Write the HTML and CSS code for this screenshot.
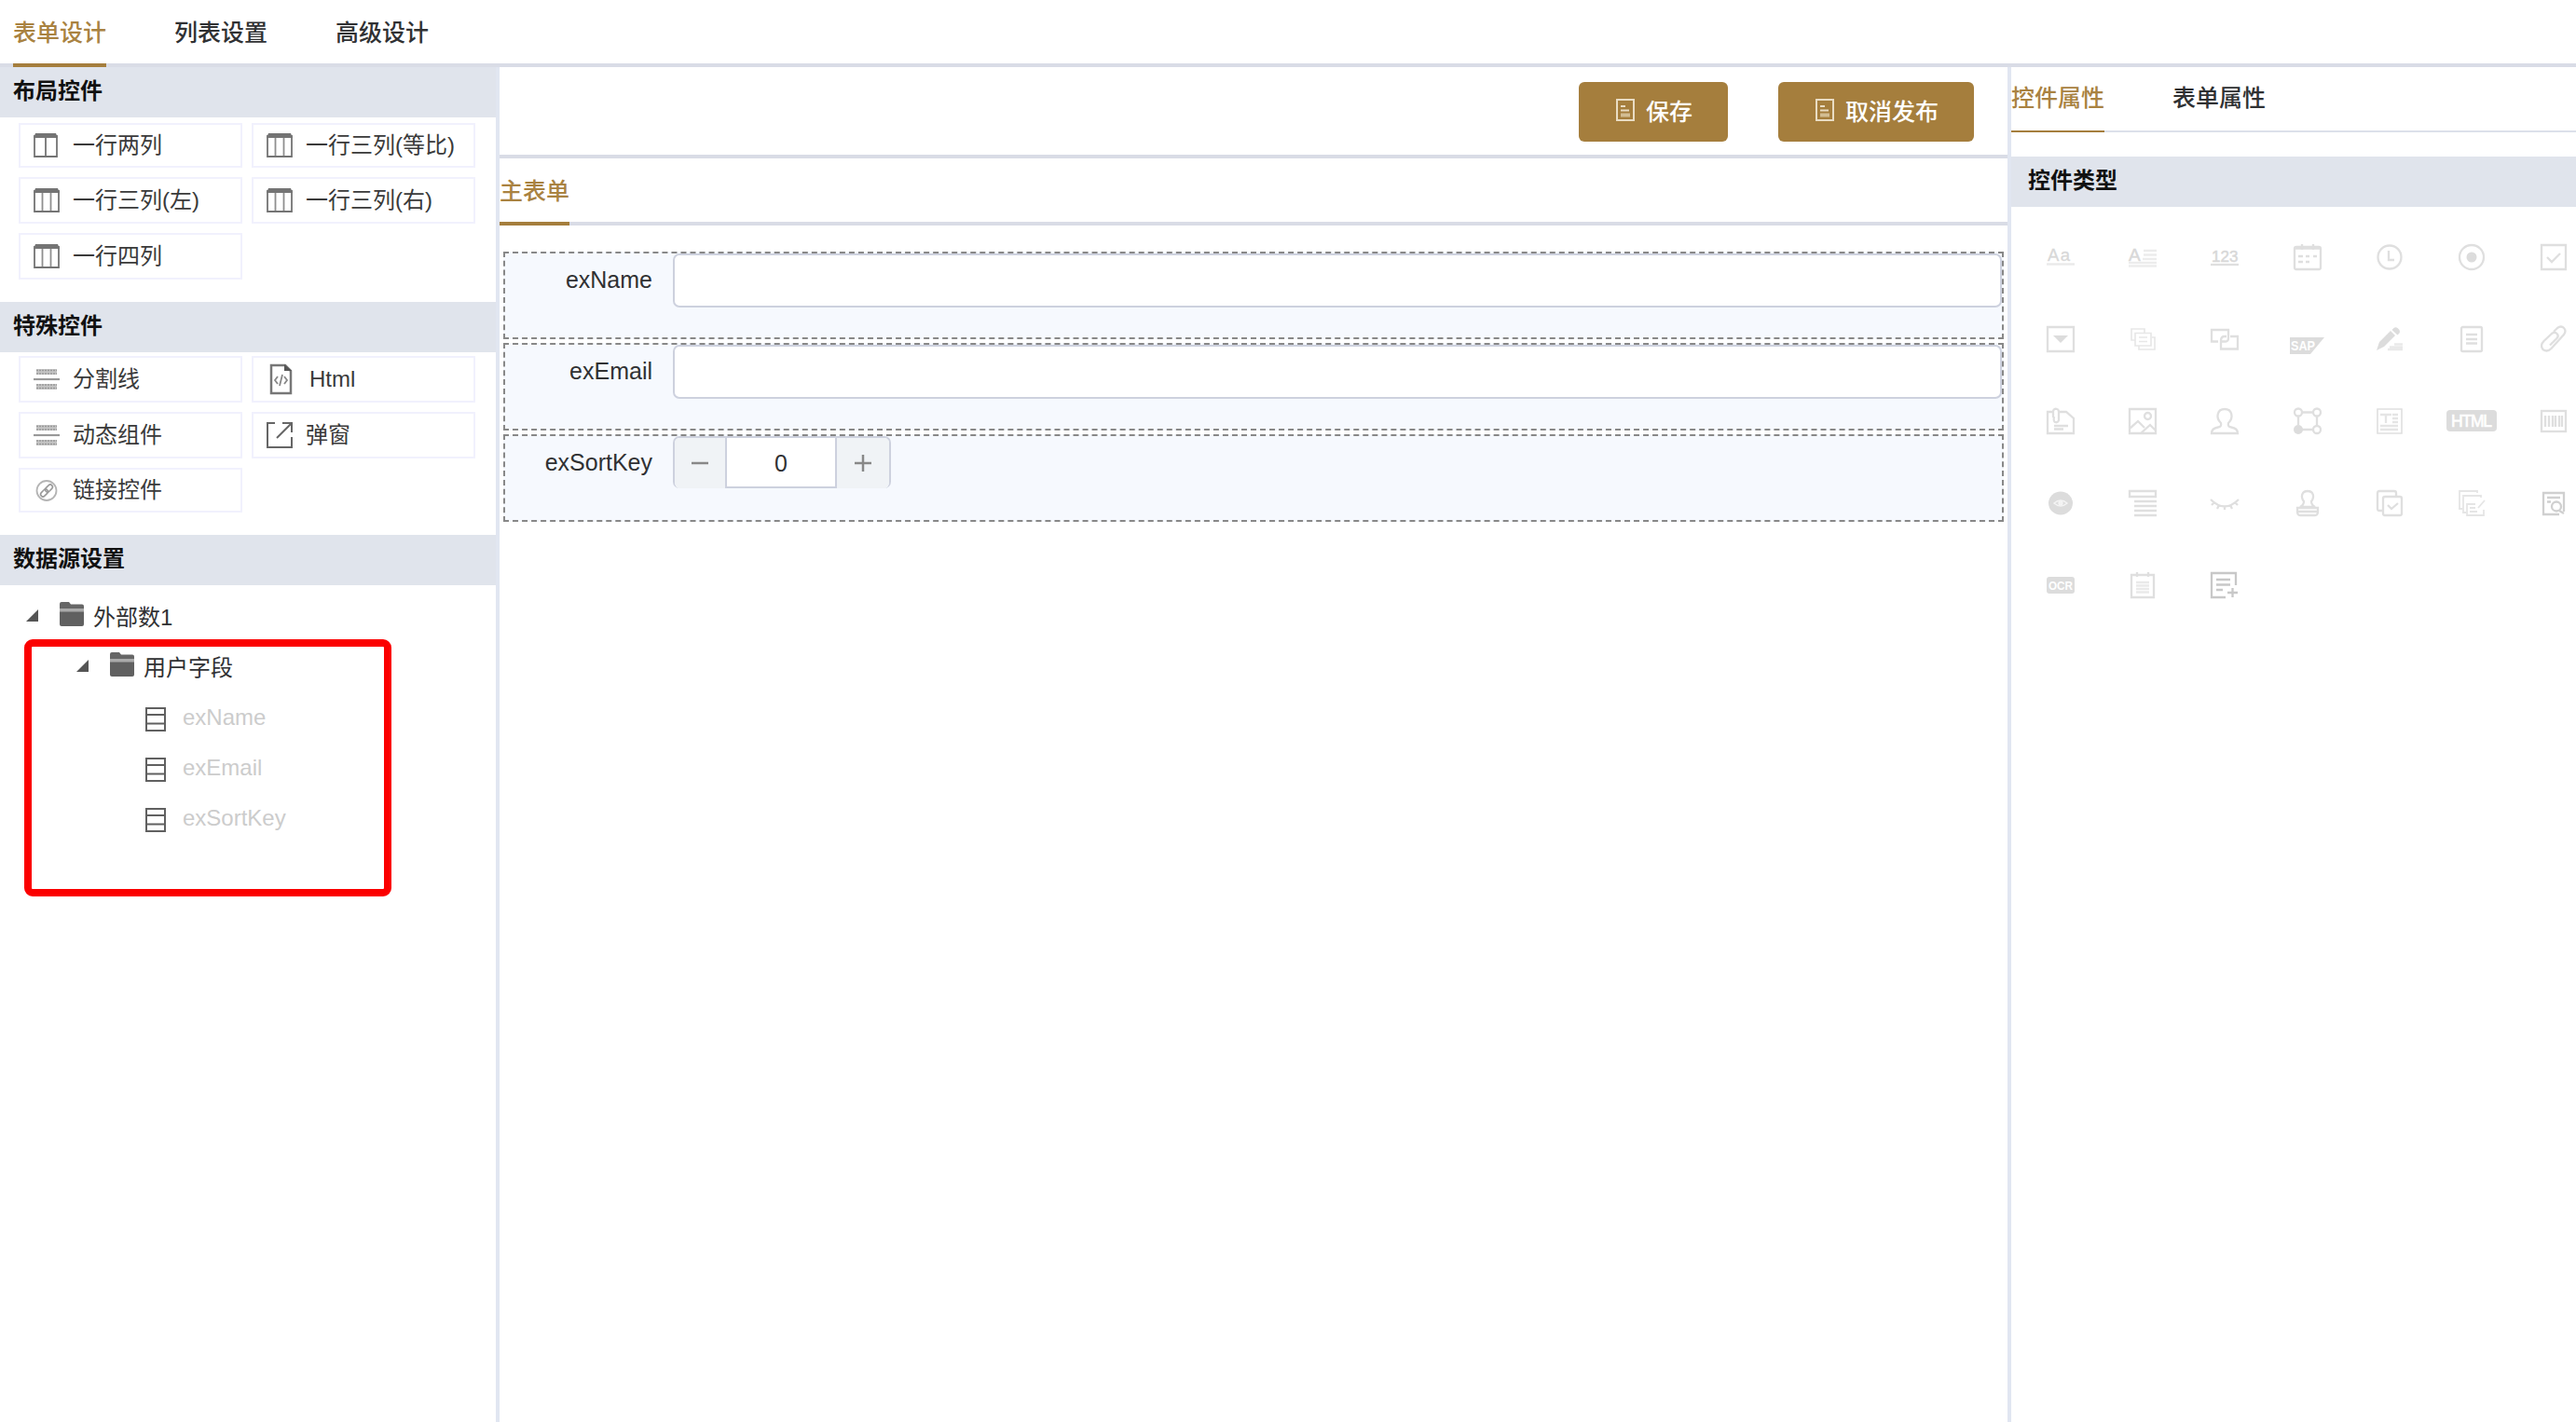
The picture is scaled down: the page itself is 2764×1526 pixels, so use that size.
FILE: index.html
```html
<!DOCTYPE html>
<html lang="zh-CN">
<head>
<meta charset="UTF-8">
<meta name="viewport" content="width=device-width, initial-scale=1.0">
<title>表单设计</title>
<link rel="stylesheet" href="styles.css">
</head>
<body>
<!-- shared symbols -->
<svg class="symbols" aria-hidden="true">
  <symbol id="i-col2" viewBox="0 0 26 26">
    <path d="M1 2v23h24V2M13 4v21" fill="none" stroke="currentColor" stroke-width="1.8"/>
    <path d="M2 0h22l2 5H0z" fill="currentColor"/>
  </symbol>
  <symbol id="i-col3" viewBox="0 0 28 26">
    <path d="M1 2v23h26V2" fill="none" stroke="currentColor" stroke-width="1.8"/>
    <path d="M9.500 4v21M18.500 4v21" stroke="currentColor" stroke-width="1.8" opacity=".8"/>
    <path d="M2 0h24l2 5H0z" fill="currentColor"/>
  </symbol>
  <symbol id="i-split" viewBox="0 0 28 26">
    <path d="M3 5h22M3 21h22" stroke="#c4c4c4" stroke-width="6"/>
    <path d="M3 3.500h22M3 7h22M3 19h22M3 22.500h22" stroke="#999" stroke-width="1.500" stroke-dasharray="2 1"/>
    <path d="M0 13h28" stroke="#999" stroke-width="2.200"/>
  </symbol>
  <symbol id="i-folder" viewBox="0 0 26 26">
    <path d="M0 2q0-2 2-2h8l2 2.500h12q2 0 2 2V7H0z" fill="#666"/>
    <path d="M0 7h26v4H0z" fill="#aaa"/>
    <path d="M0 10.500h26V24q0 2-2 2H2q-2 0-2-2z" fill="#606060"/>
  </symbol>
  <symbol id="i-field" viewBox="0 0 22 26">
    <path d="M1 1h20v24H1zM1 8h20M1 17.500h20" fill="none" stroke="#606060" stroke-width="2"/>
  </symbol>
  <symbol id="i-doc" viewBox="0 0 20 24">
    <path d="M1 1h18v22H1z" fill="none" stroke="#e9dcc3" stroke-width="2"/>
    <path d="M5 8h5M5 12.500h9" stroke="#e9dcc3" stroke-width="1.800"/>
    <path d="M5 17.500h10" stroke="#d3bd93" stroke-width="4"/>
  </symbol>
</svg>

<div class="main-tabs">
  <div class="tab active">表单设计</div>
  <div class="tab">列表设置</div>
  <div class="tab">高级设计</div>
</div>

<div class="designer">
  <div class="left-panel">
    <div class="section-title">布局控件</div>
    <div class="widgets layout-widgets">
      <div class="widget"><svg class="w-icon small"><use href="#i-col2"/></svg>一行两列</div>
      <div class="widget"><svg class="w-icon"><use href="#i-col3"/></svg>一行三列(等比)</div>
      <div class="widget"><svg class="w-icon"><use href="#i-col3"/></svg>一行三列(左)</div>
      <div class="widget"><svg class="w-icon"><use href="#i-col3"/></svg>一行三列(右)</div>
      <div class="widget"><svg class="w-icon"><use href="#i-col3"/></svg>一行四列</div>
    </div>

    <div class="section-title">特殊控件</div>
    <div class="widgets special-widgets">
      <div class="widget"><svg class="w-icon"><use href="#i-split"/></svg>分割线</div>
      <div class="widget html-widget">
        <svg class="w-icon tall" viewBox="0 0 28 34">
          <path d="M5 2h15l6 6v24H5z" fill="none" stroke="#777" stroke-width="2.500"/>
          <path d="M19 1l8 7h-8z" fill="#555"/>
          <path d="M12 14l-3 4 3 4M19 14l3 4-3 4M17 12l-3 12" fill="none" stroke="#888" stroke-width="1.800"/>
        </svg>Html
      </div>
      <div class="widget"><svg class="w-icon"><use href="#i-split"/></svg>动态组件</div>
      <div class="widget">
        <svg class="w-icon popup" viewBox="0 0 28 28">
          <path d="M9 1H1v26h26V16M17 1h10v10M26 2L11 17" fill="none" stroke="#666" stroke-width="2"/>
        </svg>弹窗
      </div>
      <div class="widget">
        <svg class="w-icon" viewBox="0 0 28 26">
          <circle cx="14" cy="13.500" r="10.500" fill="none" stroke="#b4b4b4" stroke-width="1.800"/>
          <g fill="none" stroke="#999" stroke-width="1.600" transform="rotate(-45 14 13.500)">
            <rect x="6" y="11" width="9" height="5" rx="2.500"/>
            <rect x="13" y="11" width="9" height="5" rx="2.500"/>
          </g>
        </svg>链接控件
      </div>
    </div>

    <div class="section-title">数据源设置</div>
    <div class="tree">
      <div class="node level-1">
        <svg class="caret" viewBox="0 0 14 14"><path d="M13 0v13H0z" fill="#555"/></svg>
        <svg class="folder"><use href="#i-folder"/></svg>外部数1
      </div>
      <div class="node level-2">
        <svg class="caret" viewBox="0 0 14 14"><path d="M13 0v13H0z" fill="#555"/></svg>
        <svg class="folder"><use href="#i-folder"/></svg>用户字段
      </div>
      <div class="node level-3"><svg class="field"><use href="#i-field"/></svg>exName</div>
      <div class="node level-3"><svg class="field"><use href="#i-field"/></svg>exEmail</div>
      <div class="node level-3"><svg class="field"><use href="#i-field"/></svg>exSortKey</div>
      <div class="highlight"></div>
    </div>
  </div>

  <div class="center-panel">
    <div class="toolbar">
      <button class="btn"><svg class="btn-icon"><use href="#i-doc"/></svg>保存</button>
      <button class="btn"><svg class="btn-icon"><use href="#i-doc"/></svg>取消发布</button>
    </div>
    <div class="form-tabs">
      <div class="tab active">主表单</div>
    </div>
    <div class="form">
      <div class="form-row">
        <label class="label">exName</label>
        <div class="input"></div>
      </div>
      <div class="form-row">
        <label class="label">exEmail</label>
        <div class="input"></div>
      </div>
      <div class="form-row">
        <label class="label">exSortKey</label>
        <div class="stepper">
          <div class="step minus"><svg class="step-icon" viewBox="0 0 18 18"><path d="M0 9h18"/></svg></div>
          <div class="value">0</div>
          <div class="step"><svg class="step-icon" viewBox="0 0 18 18"><path d="M0 9h18M9 0v18"/></svg></div>
        </div>
      </div>
    </div>
  </div>

  <div class="right-panel">
    <div class="prop-tabs">
      <div class="tab active">控件属性</div>
      <div class="tab">表单属性</div>
    </div>
    <div class="section-title type-title">控件类型</div>
    <div class="types">
      <!-- row 1 -->
      <svg viewBox="0 0 32 32"><text x="2" y="20" font-size="18.500" textLength="24" stroke-width=".3">Aa</text><path d="M1 23.500h30" opacity=".7"/></svg>
      <svg viewBox="0 0 32 32"><text x="1" y="20" font-size="19" textLength="15" stroke-width=".5">A</text><path d="M17 9h14M17 13.500h14M16 18h15M1 22h30M1 25.500h30" opacity=".6"/></svg>
      <svg viewBox="0 0 32 32"><text x="2" y="20.500" font-size="17" stroke-width=".5">123</text><path d="M1 24h30"/></svg>
      <svg viewBox="0 0 32 32"><rect x="2" y="5" width="28" height="24" rx="2"/><path d="M2 6.500h28M10 2v6M22 2v6M6 15h5M14 15h4M22 15h4M6 21h5M14 21h4"/></svg>
      <svg viewBox="0 0 32 32"><circle cx="16" cy="16" r="12.500"/><path d="M15 9v10h6"/></svg>
      <svg viewBox="0 0 32 32"><circle cx="16" cy="16" r="13"/><circle class="fill" cx="16" cy="16" r="5.500"/></svg>
      <svg viewBox="0 0 32 32"><path d="M3 3h26v26H3zM9 16l5 5 9-9"/></svg>
      <!-- row 2 -->
      <svg viewBox="0 0 32 32"><path d="M2 3h28v26H2z"/><path class="fill" d="M8 12h16l-8 8z"/></svg>
      <svg viewBox="0 0 32 32" opacity=".75"><path d="M8 17H4V5h14v4M26 14h3v13H12v-4" stroke-width="1.600"/><path d="M8 9.500h17v13.500H8zM12 14h9M12 18.500h9" stroke-width="1.600"/></svg>
      <svg viewBox="0 0 32 32"><path d="M9 18.500H2V6h18v8.500q0 4-3 4h-4M22 13h8v13.500H12v-9q0-4.500 4-4.500h2"/></svg>
      <svg class="wide" viewBox="0 0 40 32"><path class="fill" d="M1 14h37L23 32H1z"/><text class="knock" x="2" y="28" font-size="15" textLength="26" lengthAdjust="spacingAndGlyphs" font-weight="bold">SAP</text></svg>
      <svg viewBox="0 0 32 32"><path class="fill" d="M2 28l3-9L17 7l5 5L10 24zM18.500 6l2-2q2-1.500 4 0l2 2q1 2 0 3.500l-2 2z"/><path d="M21 21.500h9M16 24.500h14M14 27h16" opacity=".7"/></svg>
      <svg viewBox="0 0 32 32"><rect x="5" y="3" width="22" height="26" rx="1.500"/><path d="M10 11h12M10 16h12M10 20.500h12"/></svg>
      <svg viewBox="0 0 32 32"><path d="M16 8l4-4q4-3 7 0t0 7L13.500 26q-4.500 4.500-9 1-3.500-4.500 1-9L14 10q3-2.500 5.500 0t0 5L12 22.500"/></svg>
      <!-- row 3 -->
      <svg viewBox="0 0 32 32"><path d="M7 6H2v23h28V13l-8-7h-8M8 12V5q1-3 4-2 2 .500 2 3v9q-1 3-4 2-2-1-1-6M9 21h15M9 24.500h10"/></svg>
      <svg viewBox="0 0 32 32"><path d="M2 3h28v26H2zM2 24l9-8 7 7M14 29l10-9 6 6"/><circle cx="21.500" cy="10.500" r="3.500"/></svg>
      <svg viewBox="0 0 32 32"><path d="M12 18C6 12 8 3 16 3s10 9 4 15q-1 4 3 4.500 7 1 7 6.500H2q0-5.500 7-6.500 4-.500 3-4.500z"/></svg>
      <svg viewBox="0 0 32 32"><path d="M10 6.500h12M26 11v9M22 25H10M6 20v-9"/><circle cx="6" cy="6.500" r="4"/><circle cx="26" cy="6.500" r="4"/><circle cx="26" cy="25" r="4"/><circle class="fill" cx="6" cy="25" r="5"/></svg>
      <svg viewBox="0 0 32 32"><path d="M3 3h26v26H3z" stroke-width="1.600"/><path d="M6 9h12M12 9v9M19 9h6M19 13h6M19 17h6M6 21h19M6 25h19" opacity=".8"/></svg>
      <svg class="html-type" viewBox="0 0 54 32"><rect class="fill" x="0" y="4" width="54" height="23" rx="4"/><text class="knock thick" x="5" y="22" font-size="17.500" textLength="44">HTML</text></svg>
      <svg viewBox="0 0 32 32"><rect x="3" y="5" width="26" height="22"/><path d="M7 10v12M11 10v12M15 10v12M18 10v12M22 10v12M25 10v12"/></svg>
      <!-- row 4 -->
      <svg viewBox="0 0 32 32"><ellipse class="fill" cx="16" cy="16" rx="13" ry="12.500"/><path d="M9 16q7-6 14 0-7 6-14 0z" stroke="#f4f4f4" stroke-width="1.500"/><circle cx="16" cy="16" r="1.500" stroke="#f4f4f4"/></svg>
      <svg viewBox="0 0 32 32"><path d="M2 3h28v6H2zM7 14h24M7 19h24M7 24h24M7 29h24"/></svg>
      <svg viewBox="0 0 32 32"><path d="M1 12q15 15 30 0M5 15l-3 3M10 18l-2 4M16 19v4M22 18l2 4M27 15l3 3"/></svg>
      <svg viewBox="0 0 32 32"><path d="M12 14C8 9 10 3 16 3s8 6 4 11q0 4 4 6H8q4-2 4-6zM5 21h22v4q0 4-3 4H8q-3 0-3-4zM6 25h20"/></svg>
      <svg viewBox="0 0 32 32"><path d="M8 24H5q-2 0-2-2V5q0-2 2-2h16q2 0 2 2v3"/><rect x="9" y="9" width="20" height="20" rx="2"/><path d="M14 18l4 4 7-6"/></svg>
      <svg viewBox="0 0 32 32" opacity=".8"><path d="M6 22H3V3h19v2M10 26H7V8h19v2M29 23v6H11V17h9M14 21h6M14 25h8M30 13l-7 8" stroke-width="1.800"/></svg>
      <svg class="dark" viewBox="0 0 32 32"><path d="M22 28H5V5h22v20M9 10h14M9 14.500h4M22 24l5 3"/><circle cx="19" cy="19.500" r="5"/></svg>
      <!-- row 5 -->
      <svg viewBox="0 0 32 32"><rect class="fill" x="1" y="7" width="30" height="18" rx="3"/><text class="knock" x="3" y="21" font-size="13" textLength="26" lengthAdjust="spacingAndGlyphs" font-weight="bold">OCR</text></svg>
      <svg viewBox="0 0 32 32"><path d="M4 5h24v24H4zM10 2v5M22 2v5"/><path d="M9 13h14M9 16.500h14M9 20h14M9 23.500h14" opacity=".7"/></svg>
      <svg class="darker" viewBox="0 0 32 32"><path d="M17 29H2V3h26v13M7 10h15M7 15.500h15M7 21h7M19 24h11M24.500 19v10"/></svg>
    </div>
  </div>
</div>
</body>
</html>
```
FILE: styles.css
```css
* {
  box-sizing: border-box;
}

body {
  margin: 0;
  height: 1526px;
  overflow: hidden;
  display: flex;
  flex-direction: column;
  background-color: #fff;
  color: #303133;
  font-family: "Liberation Sans", "Noto Sans CJK SC", sans-serif;
  font-size: 24px;
}

svg {
  display: block;
  flex: none;
}

.symbols {
  display: none;
}

/* tabs */
.main-tabs,
.form-tabs,
.prop-tabs {
  display: flex;
  gap: 73px;
  font-size: 25px;
  font-weight: 500;
}

.main-tabs {
  height: 72px;
  padding-left: 14px;
  border-bottom: 4px solid #d9dce6;
  flex: none;
}

.tab {
  height: 72px;
  line-height: 71px;
  white-space: nowrap;
}

.tab.active {
  color: #a98241;
  border-bottom: 4px solid #a57e3d;
}

.designer {
  flex: 1;
  display: flex;
}

/* left panel */
.left-panel {
  width: 536px;
  border-right: 4px solid #e1e6f1;
}

.section-title {
  height: 54px;
  line-height: 52px;
  padding-left: 14px;
  background-color: #e0e4ec;
  color: #111;
  font-weight: bold;
}

.widgets {
  display: grid;
  grid-template-columns: 240px 240px;
  gap: 10px;
  padding-left: 20px;
}

.layout-widgets {
  grid-template-rows: 48px 50px 50px;
  padding-top: 6px;
  padding-bottom: 24px;
}

.special-widgets {
  grid-template-rows: 50px 50px 48px;
  padding-top: 4px;
  padding-bottom: 24px;
}

.widget {
  display: flex;
  align-items: center;
  gap: 14px;
  padding: 0 0 1px 14px;
  border: 2px solid #f1f1fd;
  color: #3a3a3a;
  line-height: 42px;
}

.w-icon {
  width: 28px;
  height: 26px;
  color: #747474;
}

.w-icon.small {
  width: 26px;
  margin-right: 2px;
}

.w-icon.tall {
  height: 34px;
}

.w-icon.popup {
  height: 28px;
}

.html-widget {
  gap: 18px;
}

/* tree */
.tree {
  position: relative;
  padding-top: 7px;
}

.node {
  display: flex;
  align-items: center;
  height: 54px;
}

.level-1,
.level-2 {
  padding-bottom: 3px;
}

.level-1 {
  padding-left: 28px;
}

.level-2 {
  padding-left: 82px;
}

.level-3 {
  padding-left: 156px;
  color: #ccc;
}

.caret {
  width: 14px;
  height: 14px;
  margin-right: 22px;
}

.folder {
  width: 26px;
  height: 26px;
  margin: -3px 10px 0 0;
}

.field {
  width: 22px;
  height: 26px;
  margin: 3px 18px 0 0;
}

/* red frame over the user fields */
.highlight {
  position: absolute;
  left: 26px;
  top: 58px;
  width: 394px;
  height: 276px;
  border: 8px solid #fb0000;
  border-radius: 9px;
}

/* center panel */
.center-panel {
  width: 1618px;
}

.toolbar {
  display: flex;
  justify-content: flex-end;
  gap: 54px;
  height: 98px;
  padding: 16px 36px 0 0;
  border-bottom: 4px solid #d9dce6;
}

.btn {
  display: flex;
  align-items: center;
  height: 64px;
  padding: 0 38px 4px 40px;
  border: none;
  border-radius: 6px;
  background-color: #a57e3d;
  color: #fff;
  font-family: inherit;
  font-size: 25px;
  font-weight: 500;
}

.btn-icon {
  width: 20px;
  height: 24px;
  margin-right: 12px;
}

.form-tabs {
  height: 72px;
  border-bottom: 4px solid #d9dce6;
}

.form {
  display: flex;
  flex-direction: column;
  gap: 4px;
  padding: 28px 4px 0;
}

.form-row {
  display: flex;
  height: 94px;
  border: 2px dashed #888;
  background-color: #f6f9fe;
}

.label {
  width: 180px;
  padding-right: 22px;
  text-align: right;
  font-size: 25px;
  line-height: 57px;
}

.input {
  flex: 1;
  height: 58px;
  border: 2px solid #cdd1de;
  border-radius: 7px;
  background-color: #fff;
}

.stepper {
  display: flex;
  width: 234px;
  height: 56px;
  border: 2px solid #cdd1de;
  border-bottom: none;
  border-radius: 7px;
  overflow: hidden;
}

.step {
  display: flex;
  flex: 1;
  align-items: center;
  justify-content: center;
  background-color: #f0f3f6;
}

.step.minus {
  flex: 0 0 54px;
}

.step-icon {
  width: 18px;
  height: 18px;
  stroke: #888;
  stroke-width: 2.5;
}

.value {
  width: 120px;
  border: 2px solid #cdd1de;
  border-top: none;
  background-color: #fff;
  text-align: center;
  font-size: 25px;
  line-height: 55px;
}

/* right panel */
.right-panel {
  flex: 1;
  min-width: 0;
  overflow: hidden;
  border-left: 4px solid #e1e6f1;
}

.prop-tabs {
  height: 70px;
  margin-bottom: 26px;
  border-bottom: 2px solid #dce0ea;
}

.prop-tabs .tab {
  height: 70px;
  line-height: 67px;
}

.prop-tabs .tab.active {
  border-bottom-width: 2px;
}

.type-title {
  padding-left: 18px;
}

.types {
  display: grid;
  grid-template-columns: repeat(7, 88.2px);
  grid-auto-rows: 88px;
  place-items: center;
  padding: 10px 0 0 9px;
}

.types svg {
  width: 32px;
  height: 32px;
  overflow: visible;
  fill: none;
  stroke: #dfdfdf;
  stroke-width: 2.3;
}

.types svg.wide {
  width: 40px;
}

.types svg.html-type {
  width: 54px;
}

.types svg.dark {
  stroke: #d0d0d0;
}

.types svg.darker {
  stroke: #c8c8c8;
}

.types .fill {
  fill: #dcdcdc;
  stroke: none;
}

.types text {
  fill: #d8d8d8;
  stroke: #d8d8d8;
}

.types .knock {
  fill: #fff;
  stroke: none;
}

.types .thick {
  stroke: #fff;
  stroke-width: 0.6;
}
```
